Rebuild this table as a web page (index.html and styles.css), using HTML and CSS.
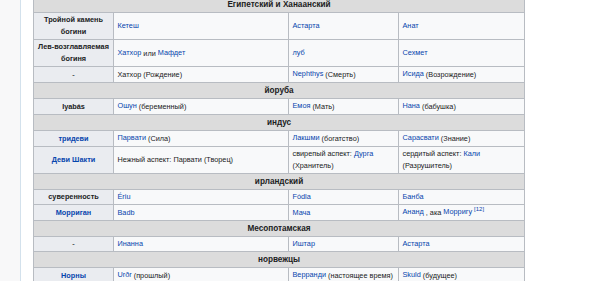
FILE: index.html
```html
<!DOCTYPE html>
<html lang="ru">
<head>
<meta charset="utf-8">
<title>Тройная богиня</title>
<link rel="stylesheet" href="styles.css">
</head>
<body>
<div class="page">
  <div class="side"></div>
  <div class="content">
    <table class="wikitable">
      <colgroup>
        <col class="c1"><col class="c2"><col class="c3"><col class="c4">
      </colgroup>
      <tr><th class="section" colspan="4">Египетский и Ханаанский</th></tr>
      <tr>
        <th class="label">Тройной камень богини</th>
        <td><a href="#">Кетеш</a></td>
        <td><a href="#">Астарта</a></td>
        <td><a href="#">Анат</a></td>
      </tr>
      <tr>
        <th class="label">Лев-возглавляемая богиня</th>
        <td><a href="#">Хатхор</a> <span class="tr">или</span> <a href="#">Мафдет</a></td>
        <td><a href="#">луб</a></td>
        <td><a href="#">Сехмет</a></td>
      </tr>
      <tr>
        <th class="label dash">-</th>
        <td>Хатхор (Рождение)</td>
        <td><a href="#">Nephthys</a> <span class="tr">(Смерть)</span></td>
        <td><a href="#">Исида</a> <span class="tr">(Возрождение)</span></td>
      </tr>
      <tr><th class="section" colspan="4">йоруба</th></tr>
      <tr>
        <th class="label">Iyabás</th>
        <td><a href="#">Ошун</a> <span class="tr">(беременный)</span></td>
        <td><a href="#">Емоя</a> <span class="tr">(Мать)</span></td>
        <td><a href="#">Нана</a> <span class="tr">(бабушка)</span></td>
      </tr>
      <tr><th class="section" colspan="4">индус</th></tr>
      <tr>
        <th class="label"><a href="#">тридеви</a></th>
        <td><a href="#">Парвати</a> <span class="tr">(Сила)</span></td>
        <td><a href="#">Лакшми</a> <span class="tr">(богатство)</span></td>
        <td><a href="#">Сарасвати</a> <span class="tr">(Знание)</span></td>
      </tr>
      <tr>
        <th class="label"><a href="#">Деви Шакти</a></th>
        <td>Нежный аспект: Парвати (Творец)</td>
        <td>свирепый аспект: <a href="#">Дурга</a> (Хранитель)</td>
        <td>сердитый аспект: <a href="#">Кали</a> (Разрушитель)</td>
      </tr>
      <tr><th class="section" colspan="4">ирландский</th></tr>
      <tr>
        <th class="label">суверенность</th>
        <td><a href="#">Ériu</a></td>
        <td><a href="#">Fódla</a></td>
        <td><a href="#">Банба</a></td>
      </tr>
      <tr>
        <th class="label"><a href="#">Морриган</a></th>
        <td><a href="#">Badb</a></td>
        <td><a href="#">Мача</a></td>
        <td><a href="#">Ананд</a> <span class="tr">, ака</span> <a href="#">Морригу</a> <sup><a href="#">[12]</a></sup></td>
      </tr>
      <tr><th class="section" colspan="4">Месопотамская</th></tr>
      <tr>
        <th class="label dash">-</th>
        <td><a href="#">Инанна</a></td>
        <td><a href="#">Иштар</a></td>
        <td><a href="#">Астарта</a></td>
      </tr>
      <tr><th class="section" colspan="4">норвежцы</th></tr>
      <tr>
        <th class="label"><a href="#">Норны</a></th>
        <td><a href="#">Urðr</a> <span class="tr">(прошлый)</span></td>
        <td><a href="#">Верранди</a> <span class="tr">(настоящее время)</span></td>
        <td><a href="#">Skuld</a> <span class="tr">(будущее)</span></td>
      </tr>
    </table>
  </div>
</div>
</body>
</html>
```
FILE: styles.css
```css
html, body {
  margin: 0;
  padding: 0;
  background: #ffffff;
}

.page {
  display: flex;
  min-height: 281px;
}

.side {
  width: 20px;
  flex: none;
  background: #f8f8f9;
}

.content {
  flex: 1;
  border-left: 1px solid #d3e1ec;
  padding-left: 12px;
  background: #ffffff;
}

.wikitable {
  margin-top: -4px;
  border-collapse: collapse;
  table-layout: fixed;
  width: 491px;
  font-family: "Liberation Sans", Arial, sans-serif;
  font-size: 7.3px;
  line-height: 12px;
  color: #202122;
  background: #f8f9fa;
}

.c1 { width: 80px; }
.c2 { width: 175px; }
.c3 { width: 110px; }
.c4 { width: 126px; }

.wikitable th,
.wikitable td {
  border: 1px solid #b8bcc2;
  padding: 1px 3.5px;
  vertical-align: middle;
}

.wikitable td {
  text-align: left;
}

.wikitable th.label {
  background: #eaecf0;
  font-weight: bold;
  text-align: center;
}

.wikitable th.section {
  background: #dcdcdc;
  font-size: 8.2px;
  font-weight: bold;
  text-align: center;
  padding: 2px 3.5px 1px;
}

.dash {
  color: #54595d;
}

.wikitable a {
  color: #0645ad;
  text-decoration: none;
}

.tr {
  vertical-align: -1px;
}

sup {
  font-size: 6px;
  line-height: 0;
  vertical-align: 3px;
}
```
